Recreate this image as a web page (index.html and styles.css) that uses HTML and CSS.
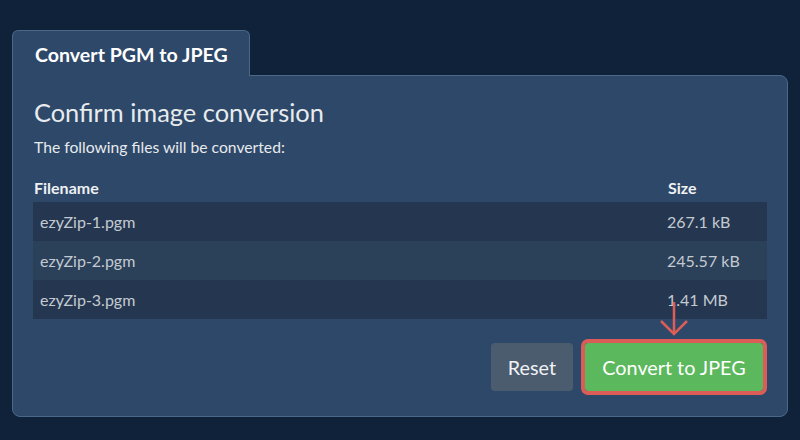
FILE: index.html
```
<!DOCTYPE html>
<html>
<head>
<meta charset="utf-8">
<link rel="stylesheet" href="styles.css">
</head>
<body>
<div class="wrap">
  <div class="tab">Convert PGM to JPEG</div>
  <div class="panel">
    <h1 class="title">Confirm image conversion</h1>
    <p class="sub">The following files will be converted:</p>
    <div class="table">
      <div class="th name">Filename</div>
      <div class="th size">Size</div>
      <div class="row odd"><div class="td name">ezyZip-1.pgm</div><div class="td size">267.1 kB</div></div>
      <div class="row even"><div class="td name">ezyZip-2.pgm</div><div class="td size">245.57 kB</div></div>
      <div class="row odd"><div class="td name">ezyZip-3.pgm</div><div class="td size">1.41 MB</div></div>
    </div>
    <div class="actions">
      <button class="btn reset">Reset</button>
      <div class="convert-wrap">
        <svg class="arrow" width="30" height="34" viewBox="0 0 30 34">
          <line x1="15" y1="0" x2="15" y2="31" stroke="#dd5e58" stroke-width="2.5"/>
          <polyline points="2,19 15,32 28,19" fill="none" stroke="#dd5e58" stroke-width="2.5"/>
        </svg>
        <button class="btn convert">Convert to JPEG</button>
      </div>
    </div>
  </div>
</div>
</body>
</html>
```
FILE: styles.css
```
html, body {
  margin: 0;
  padding: 0;
}
body {
  background: #0f2239;
  font-family: Lato, "Open Sans", sans-serif;
  width: 800px;
  height: 440px;
  overflow: hidden;
}
.wrap {
  padding: 30px 12px 0 12px;
  display: flex;
  flex-direction: column;
  align-items: flex-start;
}
.tab {
  position: relative;
  z-index: 1;
  width: 238px;
  box-sizing: border-box;
  background: #2d4868;
  border: 1px solid #4b6888;
  border-bottom: none;
  border-radius: 6px 6px 0 0;
  margin-bottom: -1px;
  padding: 12px 22px 9px;
  font-size: 19.6px;
  line-height: 24px;
  font-weight: 700;
  color: #ffffff;
  white-space: nowrap;
}
.panel {
  width: 776px;
  box-sizing: border-box;
  background: #2d4868;
  border: 1px solid #4b6888;
  border-radius: 0 8px 8px 8px;
  padding: 21px 20px 25px 20px;
}
.title {
  margin: 0 0 0 1px;
  font-size: 25.4px;
  line-height: 31px;
  font-weight: 400;
  color: #e8ebee;
}
.sub {
  margin: 10px 0 0 1px;
  font-size: 15.7px;
  line-height: 19px;
  color: #e8ebee;
}
.table {
  margin-top: 21px;
  display: grid;
  grid-template-columns: 1fr 100px;
}
.th {
  font-size: 16px;
  line-height: 19px;
  font-weight: 700;
  color: #eef0f3;
  padding: 0 0 5px 1px;
}
.row {
  display: contents;
}
.td {
  height: 39px;
  display: flex;
  align-items: center;
  font-size: 16px;
  color: #c4cad2;
}
.row.odd .td {
  background: #253750;
}
.row.even .td {
  background: #2b4059;
}
.td.name {
  padding-left: 7px;
}
.actions {
  margin-top: 24px;
  display: flex;
  justify-content: flex-end;
  gap: 12px;
  padding-right: 4px;
}
.btn {
  font-family: Lato, "Open Sans", sans-serif;
  font-size: 19.8px;
  height: 48px;
  padding: 0 17px;
  border: none;
  border-radius: 4px;
  color: #ffffff;
}
.reset {
  background: #4b5c6f;
  color: #f0f2f4;
}
.convert-wrap {
  position: relative;
  display: flex;
}
.convert {
  background: #5cb85c;
  width: 178px;
  outline: 4px solid #dc5d58;
  border-radius: 3px;
}
.arrow {
  position: absolute;
  top: -41px;
  left: 74px;
}
```
